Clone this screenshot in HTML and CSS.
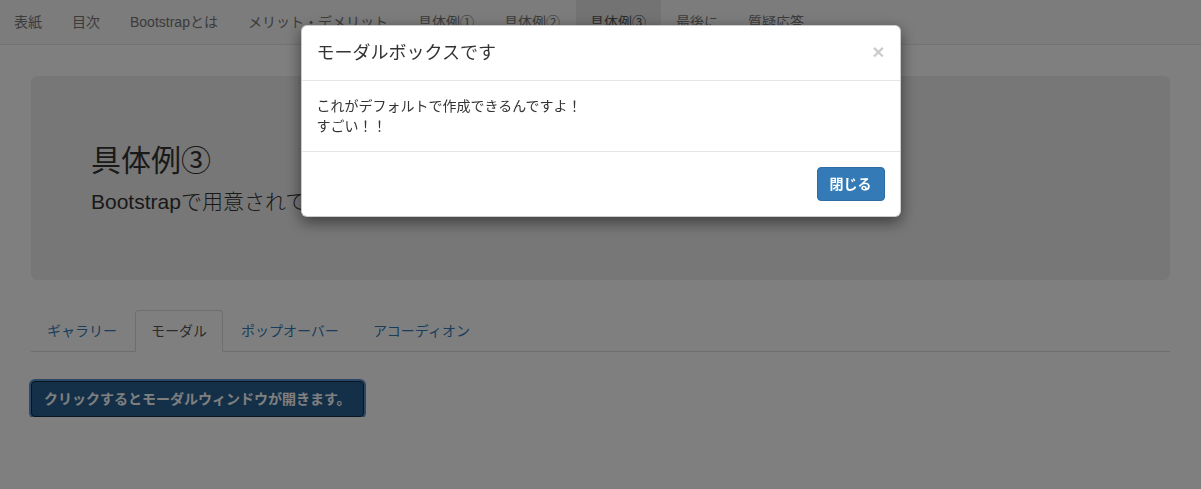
FILE: index.html
```html
<!DOCTYPE html>
<html lang="ja">
<head>
    <meta charset="UTF-8">
    <meta name="viewport" content="width=device-width, initial-scale=1.0">
    <title>具体例③</title>
    <link rel="stylesheet" href="styles.css">
</head>
<body>
    <nav class="navbar">
        <ul class="nav-list">
            <li><a href="#">表紙</a></li>
            <li><a href="#">目次</a></li>
            <li><a href="#">Bootstrapとは</a></li>
            <li><a href="#">メリット・デメリット</a></li>
            <li><a href="#">具体例①</a></li>
            <li><a href="#">具体例②</a></li>
            <li class="active"><a href="#">具体例③</a></li>
            <li><a href="#">最後に</a></li>
            <li><a href="#">質疑応答</a></li>
        </ul>
    </nav>

    <div class="container">
        <div class="jumbotron">
            <h2>具体例③</h2>
            <p>Bootstrapで用意されているJavaScriptプラグインを使ってみます。</p>
        </div>

        <ul class="nav-tabs">
            <li><a href="#">ギャラリー</a></li>
            <li class="active"><a href="#">モーダル</a></li>
            <li><a href="#">ポップオーバー</a></li>
            <li><a href="#">アコーディオン</a></li>
        </ul>

        <div class="tab-content">
            <button class="btn btn-primary btn-focus">クリックするとモーダルウィンドウが開きます。</button>
        </div>
    </div>

    <!-- Modal backdrop and dialog -->
    <div class="modal-backdrop"></div>
    <div class="modal">
        <div class="modal-dialog">
            <div class="modal-header">
                <h4 class="modal-title">モーダルボックスです</h4>
                <button class="close">&times;</button>
            </div>
            <div class="modal-body">
                <p>これがデフォルトで作成できるんですよ！</p>
                <p>すごい！！</p>
            </div>
            <div class="modal-footer">
                <button class="btn btn-primary">閉じる</button>
            </div>
        </div>
    </div>
</body>
</html>
```

FILE: styles.css
```css
body {
    margin: 0;
    font-family: "Liberation Sans", "Noto Sans CJK JP", sans-serif;
    font-size: 14px;
    line-height: 20px;
    color: #333;
    background: #fff;
}

ul {
    list-style: none;
    margin: 0;
    padding: 0;
}

a {
    text-decoration: none;
}

/* Top navigation */
.navbar {
    background: #f8f8f8;
    border-bottom: 1px solid #e7e7e7;
    height: 44px;
}

.nav-list {
    display: flex;
}

.nav-list a {
    display: block;
    padding: 12px 15px 12px 14px;
    margin-right: 1px;
    color: #777;
}

.nav-list .active a {
    background: #e7e7e7;
    color: #555;
}

/* Page content */
.container {
    padding: 31px 31px 0;
}

.jumbotron {
    background: #eee;
    border-radius: 6px;
    padding: 48px 60px;
    margin-bottom: 30px;
}

.jumbotron h2 {
    margin: 20px 0 10px;
    font-size: 30px;
    line-height: 33px;
    font-weight: 400;
}

.jumbotron p {
    margin: 0 0 15px;
    font-size: 21px;
    line-height: 30px;
    font-weight: 300;
}

.nav-tabs {
    display: flex;
    border-bottom: 1px solid #ddd;
}

.nav-tabs li {
    margin-right: 2px;
    margin-bottom: -1px;
}

.nav-tabs a {
    display: block;
    padding: 10px 15px;
    border: 1px solid transparent;
    border-radius: 4px 4px 0 0;
    color: #337ab7;
}

.nav-tabs .active a {
    color: #555;
    background: #fff;
    border-color: #ddd #ddd transparent;
}

.tab-content {
    padding-top: 29px;
}

.btn {
    font-family: inherit;
    font-size: 14px;
    line-height: 20px;
    font-weight: bold;
    padding: 6px 12px;
    border: 1px solid transparent;
    border-radius: 4px;
    cursor: pointer;
}

.btn-primary {
    color: #fff;
    background: #337ab7;
    border-color: #2e6da4;
}

.btn-focus {
    background: #286090;
    border-color: #122b40;
    padding: 7px 12px;
    box-shadow: 0 0 0 2px #5a8fcc;
}

/* Modal */
.modal-backdrop {
    position: fixed;
    inset: 0;
    background: rgba(0, 0, 0, 0.5);
}

.modal {
    position: fixed;
    inset: 0;
}

.modal-dialog {
    width: 598px;
    margin: 25px auto 0;
    background: #fff;
    border: 1px solid rgba(0, 0, 0, 0.2);
    border-radius: 6px;
    box-shadow: 0 5px 15px rgba(0, 0, 0, 0.5);
}

.modal-header {
    display: flex;
    justify-content: space-between;
    align-items: center;
    padding: 15px;
    border-bottom: 1px solid #e5e5e5;
}

.modal-title {
    margin: 0;
    font-size: 18px;
    line-height: 24px;
    font-weight: 400;
}

.close {
    background: none;
    border: 0;
    padding: 0;
    font-family: "Liberation Sans", sans-serif;
    font-size: 21px;
    font-weight: bold;
    line-height: 1;
    color: #000;
    opacity: 0.2;
    margin-top: -4px;
}

.modal-body {
    padding: 15px;
}

.modal-body p {
    margin: 0;
}

.modal-footer {
    display: flex;
    justify-content: flex-end;
    padding: 15px;
    border-top: 1px solid #e5e5e5;
}
```
